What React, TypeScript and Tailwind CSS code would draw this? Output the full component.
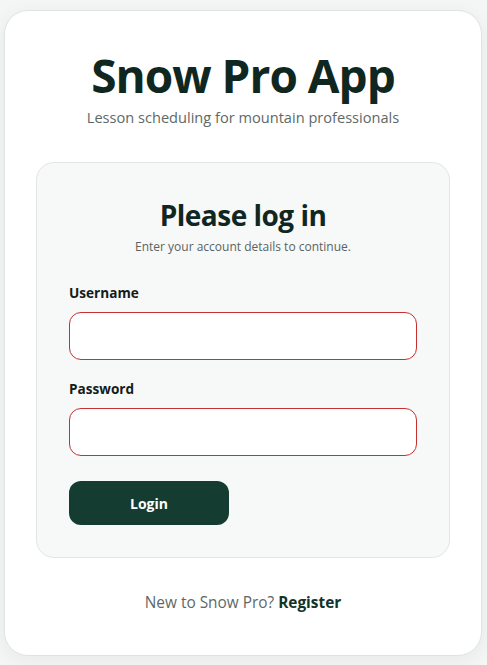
import React from "react";

const font = { fontFamily: '"Open Sans", "Noto Sans", sans-serif' };

export default function App() {
  return (
    <div className="min-h-[665px] bg-[#f4f6f5] pt-[10px] px-[4px] pb-[10px]" style={font}>
      <div className="w-[478px] rounded-[24px] border border-[#dfe4e2] bg-white px-[31px] pt-[34px] pb-[40px] shadow-[0_4px_18px_rgba(15,42,34,0.06)]">
        <h1 className="text-center text-[46px] font-bold leading-[60px] tracking-[-1px] text-[#10271f]">
          Snow Pro App
        </h1>
        <p className="text-center text-[14.6px] leading-[24px] text-[#5d6966]">
          Lesson scheduling for mountain professionals
        </p>

        <div className="mt-[33px] rounded-[18px] border border-[#e2e6e4] bg-[#f7f8f8] px-[32px] pt-[34px] pb-[32px]">
          <h2 className="text-center text-[28px] font-bold leading-[36px] tracking-[-0.5px] text-[#10271f]">
            Please log in
          </h2>
          <p className="mt-[4px] text-center text-[12px] leading-[20px] text-[#5a6461]">
            Enter your account details to continue.
          </p>

          <form className="mt-[26px] flex flex-col">
            <label className="text-[13.6px] font-bold leading-[20px] text-[#141c1a]">Username</label>
            <input
              type="text"
              className="mt-[9px] h-[48px] w-full rounded-[12px] border border-[#c53030] bg-white px-3 outline-none"
            />
            <label className="mt-[19px] text-[13.6px] font-bold leading-[20px] text-[#141c1a]">Password</label>
            <input
              type="password"
              className="mt-[9px] h-[48px] w-full rounded-[12px] border border-[#c53030] bg-white px-3 outline-none"
            />
            <button
              type="button"
              className="mt-[25px] h-[44px] w-[160px] rounded-[12px] bg-[#143c30] text-[14px] font-bold text-white"
            >
              Login
            </button>
          </form>
        </div>

        <p className="mt-[33px] text-center text-[15.4px] leading-[24px] text-[#5d6966]">
          New to Snow Pro? <span className="font-bold text-[#123328]">Register</span>
        </p>
      </div>
    </div>
  );
}
